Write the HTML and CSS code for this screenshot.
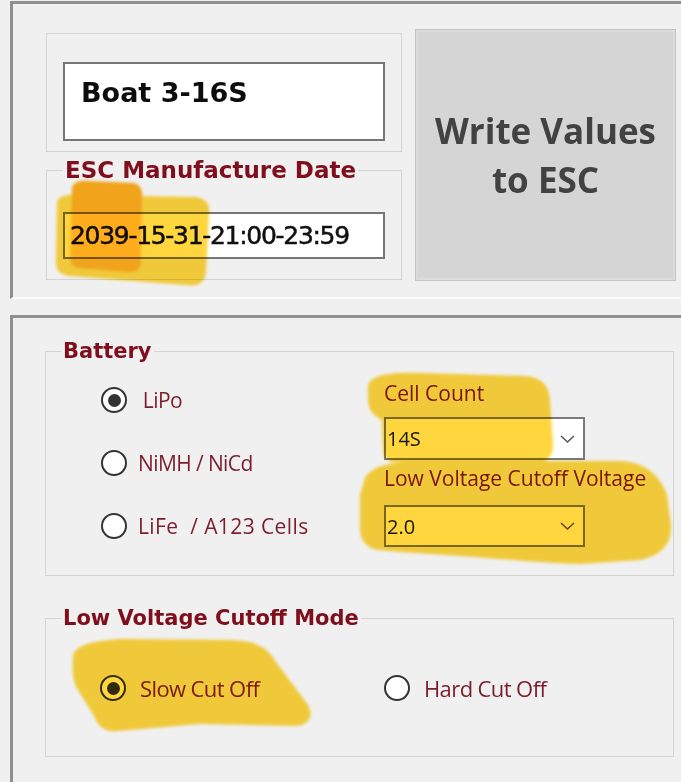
FILE: index.html
```html
<!DOCTYPE html>
<html lang="en">
<head>
<meta charset="utf-8">
<title>ESC Settings</title>
<link rel="stylesheet" href="styles.css">
</head>
<body>
<div class="app">
  <section class="panel panel-top">
    <div class="left-col">
      <fieldset class="group group-name">
        <div class="textbox name">Boat 3-16S</div>
      </fieldset>
      <fieldset class="group group-date">
        <legend class="legend legend-lg">ESC Manufacture Date</legend>
        <div class="textbox date">2039-15-31-21:00-23:59</div>
      </fieldset>
    </div>
    <button class="write-btn" type="button">Write Values<br>to ESC</button>
  </section>

  <section class="panel panel-bottom">
    <fieldset class="group battery">
      <legend class="legend">Battery</legend>
      <div class="battery-body">
        <div class="radio-col">
          <div class="radio-row"><span class="radio checked"></span><span class="radio-label lipo"> LiPo</span></div>
          <div class="radio-row"><span class="radio"></span><span class="radio-label">NiMH / NiCd</span></div>
          <div class="radio-row"><span class="radio"></span><span class="radio-label life">LiFe  / A123 Cells</span></div>
        </div>
        <div class="combo-col">
          <div class="field-label">Cell Count</div>
          <div class="combo combo-cells"><span>14S</span><svg class="chev" width="15" height="8" viewBox="0 0 15 8"><path d="M1 1 L7.5 7 L14 1" fill="none" stroke="#555" stroke-width="1.4"/></svg></div>
          <div class="field-label label-lvc">Low Voltage Cutoff Voltage</div>
          <div class="combo combo-lvc"><span>2.0</span><svg class="chev" width="15" height="8" viewBox="0 0 15 8"><path d="M1 1 L7.5 7 L14 1" fill="none" stroke="#555" stroke-width="1.4"/></svg></div>
        </div>
      </div>
    </fieldset>

    <fieldset class="group mode">
      <legend class="legend">Low Voltage Cutoff Mode</legend>
      <div class="mode-body">
        <div class="radio-row"><span class="radio checked"></span><span class="radio-label mode-label">Slow Cut Off</span></div>
        <div class="radio-row"><span class="radio"></span><span class="radio-label mode-label">Hard Cut Off</span></div>
      </div>
    </fieldset>
  </section>

  <svg class="highlights" width="681" height="782" viewBox="0 0 681 782" aria-hidden="true">
    <defs>
      <filter id="soft" x="-10%" y="-10%" width="120%" height="120%">
        <feGaussianBlur stdDeviation="1.8"/>
      </filter>
    </defs>
    <g filter="url(#soft)">
      <path fill="#ffd63c" d="M57,203 C58,196 66,194 80,195 L195,197 C206,198 210,204 209,214 L206,272 C205,283 197,287 186,285 L120,280 L70,276 C60,275 56,270 56,262 Z"/>
      <path fill="#ffad1c" d="M72,189 C72,182 80,180 90,181 L133,183 C140,184 143,190 142,198 L141,262 C141,270 135,273 127,272 L78,268 C72,267 70,262 70,255 Z"/>
      <path fill="#ffd63c" d="M368,386 C370,374 395,372 420,373 L525,376 C542,377 549,386 550,400 L553,445 C553,456 548,461 538,462 L395,462 C386,462 383,456 383,448 L382,420 C372,415 367,408 368,395 Z"/>
      <path fill="#ffd63c" d="M365,478 C372,466 390,462 420,461 L620,461 C645,462 660,475 667,495 L671,525 C672,545 660,556 640,560 L580,564 C540,563 470,556 400,552 L378,550 C366,548 360,540 360,528 L360,495 Z"/>
      <path fill="#ffd63c" d="M73,656 C75,646 90,641 120,639 L230,640 C258,641 268,648 276,662 L308,705 C314,716 309,725 296,726 L200,724 L118,731 C105,733 98,726 94,716 L78,690 C72,680 72,668 73,656 Z"/>
    </g>
  </svg>
</div>
</body>
</html>
```

FILE: styles.css
```css
* { box-sizing: border-box; }

body {
  margin: 0;
  background: #f0f0f0;
  font-family: "Open Sans", "Segoe UI", sans-serif;
}

.app {
  position: relative;
  width: 681px;
  height: 782px;
  overflow: hidden;
  padding: 1px 0 0 10px;
}

/* ---------- panels ---------- */
.panel {
  border-top: 3px solid #8f8f8f;
  border-left: 3px solid #8f8f8f;
}

.panel-top {
  display: flex;
  align-items: flex-start;
  padding: 25px 0 16px 33px;
  border-bottom: 2px solid #fbfbfb;
}

.panel-bottom {
  margin-top: 16px;
  padding: 21px 7px 0 32px;
  height: 467px;
}

.left-col {
  width: 356px;
  margin-top: 4px;
  display: flex;
  flex-direction: column;
}

/* ---------- group boxes ---------- */
.group {
  margin: 0;
  min-width: 0;
  border: 1px solid #d4d4d4;
}

.legend {
  padding: 0 2px;
  font-family: "DejaVu Sans", "Verdana", sans-serif;
  font-weight: bold;
  font-size: 21px;
  line-height: 24px;
  color: #7f0f1c;
}

.legend-lg {
  font-size: 23px;
  line-height: 26px;
}

.group-name {
  padding: 28px 16px 10px;
}

.group-date {
  margin-top: 5px;
  padding: 29px 16px 20px;
}

/* ---------- text boxes ---------- */
.textbox {
  background: #fff;
  border: 2px solid #767676;
}

.name {
  height: 79px;
  padding: 13px 0 0 16px;
  font-family: "DejaVu Sans", "Verdana", sans-serif;
  font-weight: bold;
  font-size: 27px;
  line-height: 32px;
  color: #0d0d0d;
}

.date {
  height: 47px;
  display: flex;
  align-items: center;
  padding-left: 5px;
  font-family: "DejaVu Sans", "Verdana", sans-serif;
  font-size: 25px;
  letter-spacing: -1.3px;
  color: #111;
  -webkit-text-stroke: 0.5px #111;
}

/* ---------- button ---------- */
.write-btn {
  margin-left: 13px;
  width: 261px;
  height: 252px;
  padding: 0;
  background: #d5d5d5;
  border: 1px solid #c4c4c4;
  box-shadow: inset 0 0 0 2px #dcdcdc;
  font-family: "Open Sans", "Segoe UI", sans-serif;
  font-weight: 700;
  font-size: 35px;
  line-height: 49px;
  color: #424242;
  text-align: center;
}

/* ---------- battery ---------- */
.battery {
  width: 629px;
  padding: 17px 0 28px 15px;
}

.battery-body {
  display: flex;
  align-items: flex-start;
}

.radio-col {
  width: 323px;
  padding-left: 40px;
  margin-top: 7px;
  display: flex;
  flex-direction: column;
  gap: 37px;
}

.radio-row {
  display: flex;
  align-items: center;
  height: 26px;
}

.radio {
  flex: none;
  width: 26px;
  height: 26px;
  border-radius: 50%;
  border: 2px solid #333;
  background: #fff;
  display: grid;
  place-items: center;
}

.radio.checked::after {
  content: "";
  width: 13px;
  height: 13px;
  border-radius: 50%;
  background: #333;
}

.radio-label {
  margin-left: 11px;
  font-size: 21px;
  letter-spacing: -0.6px;
  color: #7b1d2b;
  white-space: pre;
}

.radio-label.life {
  letter-spacing: 0.4px;
}

.combo-col {
  width: 201px;
  display: flex;
  flex-direction: column;
}

.field-label {
  font-size: 21px;
  line-height: 26px;
  color: #7a1622;
  white-space: nowrap;
}

.label-lvc {
  margin-top: 5px;
}

.combo {
  display: flex;
  align-items: center;
  justify-content: space-between;
  background: #fff;
  border: 2px solid #7a7a7a;
  padding: 0 8px 0 1px;
  font-size: 20px;
  color: #1a1a1a;
}

.combo-cells {
  margin-top: 11px;
  height: 43px;
}

.combo-lvc {
  margin-top: 14px;
  height: 42px;
}

/* ---------- mode ---------- */
.mode {
  width: 629px;
  margin-top: 30px;
  padding: 45px 0 55px 15px;
}

.mode-body {
  display: grid;
  grid-template-columns: 284px auto;
  padding-left: 39px;
}

.mode-label {
  margin-left: 14px;
  font-size: 22px;
  letter-spacing: -0.6px;
}

/* ---------- highlighter overlay ---------- */
.highlights {
  position: absolute;
  left: 0;
  top: 0;
  pointer-events: none;
  mix-blend-mode: multiply;
}
```
